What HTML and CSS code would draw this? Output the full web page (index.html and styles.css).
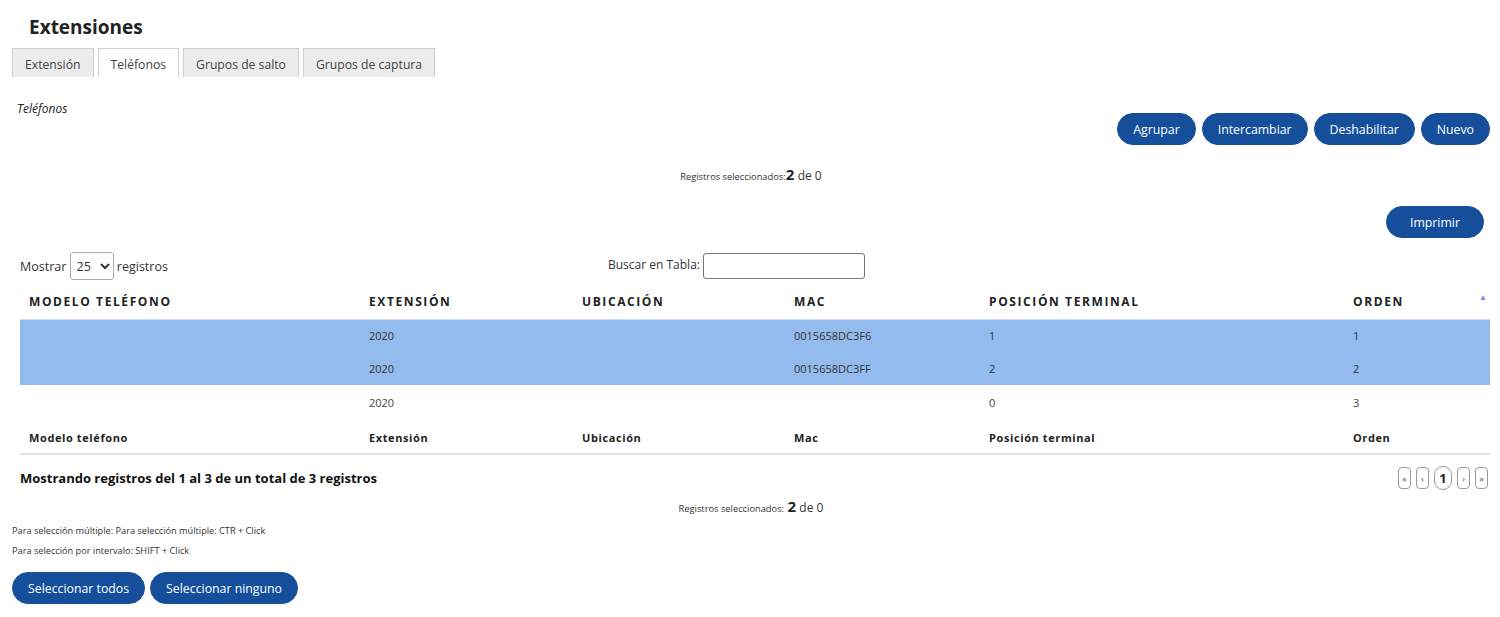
FILE: index.html
```html
<!DOCTYPE html>
<html lang="es">
<head>
<meta charset="utf-8">
<title>Extensiones</title>
<link rel="stylesheet" href="styles.css">
</head>
<body>
<div class="page">
  <h1 class="title">Extensiones</h1>
  <div class="tabs">
    <div class="tab">Extensión</div>
    <div class="tab active">Teléfonos</div>
    <div class="tab">Grupos de salto</div>
    <div class="tab">Grupos de captura</div>
  </div>
  <div class="section-label">Teléfonos</div>
  <div class="actions">
    <button class="btn">Agrupar</button>
    <button class="btn">Intercambiar</button>
    <button class="btn">Deshabilitar</button>
    <button class="btn">Nuevo</button>
  </div>
  <div class="selected top"><span class="sel-label">Registros seleccionados:</span><b class="sel-num">2</b> <span class="sel-of">de 0</span></div>
  <div class="print-row"><button class="btn btn-print">Imprimir</button></div>
  <div class="table-wrap">
    <div class="controls">
      <label class="length">Mostrar <select class="sel"><option>25</option></select> registros</label>
      <label class="search">Buscar en Tabla: <input class="search-input" type="text"></label>
    </div>
    <table class="grid">
      <colgroup>
        <col class="c1"><col class="c2"><col class="c3"><col class="c4"><col class="c5"><col class="c6">
      </colgroup>
      <thead>
        <tr>
          <th>Modelo teléfono</th>
          <th>Extensión</th>
          <th>Ubicación</th>
          <th>Mac</th>
          <th>Posición terminal</th>
          <th class="sorted">Orden<span class="arrow">▲</span></th>
        </tr>
      </thead>
      <tbody>
        <tr class="selrow"><td></td><td>2020</td><td></td><td>0015658DC3F6</td><td>1</td><td>1</td></tr>
        <tr class="selrow"><td></td><td>2020</td><td></td><td>0015658DC3FF</td><td>2</td><td>2</td></tr>
        <tr><td></td><td>2020</td><td></td><td></td><td>0</td><td>3</td></tr>
      </tbody>
      <tfoot>
        <tr>
          <th>Modelo teléfono</th>
          <th>Extensión</th>
          <th>Ubicación</th>
          <th>Mac</th>
          <th>Posición terminal</th>
          <th>Orden</th>
        </tr>
      </tfoot>
    </table>
    <div class="info-row">
      <div class="info">Mostrando registros del 1 al 3 de un total de 3 registros</div>
      <div class="pager">
        <span class="pg">«</span>
        <span class="pg">‹</span>
        <span class="pg current">1</span>
        <span class="pg">›</span>
        <span class="pg">»</span>
      </div>
    </div>
  </div>
  <div class="selected bottom"><span class="sel-label">Registros seleccionados:</span> <b class="sel-num">2</b> <span class="sel-of">de 0</span></div>
  <p class="help first">Para selección múltiple: Para selección múltiple: CTR + Click</p>
  <p class="help">Para selección por intervalo: SHIFT + Click</p>
  <div class="bottom-actions">
    <button class="btn">Seleccionar todos</button>
    <button class="btn">Seleccionar ninguno</button>
  </div>
</div>
</body>
</html>
```

FILE: styles.css
```css
* { box-sizing: border-box; }
html, body { margin: 0; padding: 0; background: #fff; }
body {
  font-family: "Open Sans", "Noto Sans", "Liberation Sans", sans-serif;
  color: #333;
  font-size: 13px;
}
.page { padding: 0 10px 0 12px; }
.title {
  margin: 0;
  padding: 15px 0 0 17px;
  height: 48px;
  font-size: 19px;
  font-weight: 700;
  color: #222;
  line-height: 24px;
}
.tabs { display: flex; gap: 4px; height: 29px; }
.tab {
  border: 1px solid #cfcfcf;
  border-bottom: none;
  background: #ececec;
  color: #444;
  font-size: 12.2px;
  padding: 2px 12px 0;
  line-height: 27px;
}
.tab.active { background: #fff; }
.section-label {
  font-style: italic;
  font-size: 12px;
  color: #222;
  padding: 23px 0 0 5px;
  line-height: 18px;
}
.actions { display: flex; justify-content: flex-end; gap: 6px; margin-top: -5px; }
.btn {
  font-family: inherit;
  background: #154f9c;
  color: #fff;
  border: 1px solid #1a4f94;
  border-radius: 16px;
  height: 32px;
  padding: 0 15px;
  font-size: 12.3px;
  cursor: pointer;
}
.selected { text-align: center; color: #333; }
.selected.top { margin-top: 19px; line-height: 20px; }
.sel-label { font-size: 9.3px; }
.sel-num { font-size: 15px; font-weight: 700; color: #222; }
.sel-of { font-size: 12px; }
.print-row { display: flex; justify-content: flex-end; margin-top: 19px; padding-right: 6px; }
.btn-print { padding: 0 23px; }
.table-wrap { padding: 0 0 0 8px; }
.controls {
  display: flex;
  align-items: center;
  margin-top: 13px;
  height: 30px;
  font-size: 12.5px;
  color: #333;
}
.length { flex: 0 0 588px; }
.search { flex: 0 0 auto; font-size: 12px; }
.sel {
  width: 44px;
  height: 28px;
  font-family: inherit;
  font-size: 12.5px;
  border: 1px solid #aaa;
  border-radius: 3px;
  background: #fff;
  padding: 0 2px;
  color: #333;
}
.search-input {
  width: 162px;
  height: 26px;
  border: 1px solid #767676;
  border-radius: 3px;
  vertical-align: middle;
}
.grid {
  width: 1470px;
  border-collapse: collapse;
  table-layout: fixed;
  margin-top: 4px;
}
.c1 { width: 340px; } .c2 { width: 213px; } .c3 { width: 212px; }
.c4 { width: 195px; } .c5 { width: 364px; } .c6 { width: 146px; }
.grid thead th {
  text-align: left;
  text-transform: uppercase;
  letter-spacing: 1.6px;
  font-size: 12px;
  font-weight: 700;
  color: #222;
  height: 34px;
  padding: 0 9px;
  border-bottom: 1px solid #cfdcee;
  vertical-align: middle;
}
.sorted { position: relative; }
.arrow {
  position: absolute;
  right: 3px;
  top: 6px;
  font-size: 8px;
  color: #7d84dc;
  letter-spacing: 0;
}
.grid td {
  height: 33px;
  padding: 0 9px;
  font-size: 11px;
  color: #444;
}
.grid tbody tr:last-child td { height: 34px; }
.selrow td { background: #94bbed; color: #333; }
.grid tfoot th {
  text-align: left;
  font-size: 11px;
  font-weight: 700;
  letter-spacing: 0.6px;
  color: #222;
  height: 35px;
  padding: 2px 9px 0;
  border-bottom: 2px solid #e2e2e2;
}
.info-row { display: flex; justify-content: space-between; align-items: center; width: 1470px; margin-top: 11px; }
.info { font-weight: 700; font-size: 13px; color: #111; }
.pager { display: flex; gap: 5px; align-items: center; margin-right: 2px; }
.pg {
  display: inline-flex;
  align-items: center;
  justify-content: center;
  min-width: 13px;
  height: 22px;
  padding: 0 3px;
  border: 1px solid #999;
  border-radius: 4px;
  font-size: 9px;
  color: #555;
}
.pg.current { font-size: 13px; font-weight: 700; color: #222; border-radius: 9px; height: 24px; min-width: 18px; }
.selected.bottom { margin-top: 6px; line-height: 20px; }
.help { margin: 0; font-size: 9.2px; color: #333; line-height: 20px; }
.help.first { margin-top: 2px; }
.bottom-actions { display: flex; gap: 5px; margin-top: 11px; }
.bottom-actions .btn { font-size: 12.3px; padding: 0 15px; }
```
